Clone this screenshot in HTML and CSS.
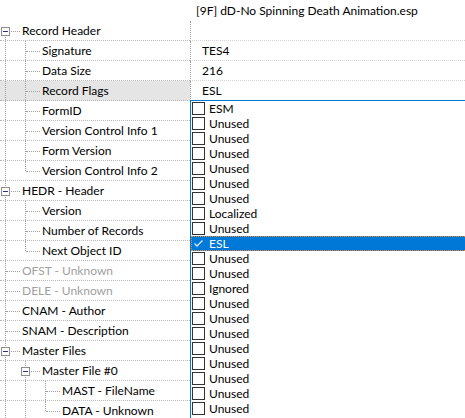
FILE: index.html
```html
<!DOCTYPE html>
<html lang="en">
  <head>
    <meta charset="UTF-8" />
    <title>Record Header</title>
    <link rel="stylesheet" href="styles.css">
  </head>
  <body>
    <div class="tree">
      <div class="row title">
        <div class="name"></div>
        <div class="value">[9F] dD-No Spinning Death Animation.esp</div>
      </div>

      <div class="row">
        <div class="name"><span class="g box first"><span class="exp"></span></span>Record Header</div>
        <div class="value"></div>
      </div>
      <div class="row">
        <div class="name"><span class="g pipe"></span><span class="g tee"></span>Signature</div>
        <div class="value">TES4</div>
      </div>
      <div class="row">
        <div class="name"><span class="g pipe"></span><span class="g tee"></span>Data Size</div>
        <div class="value">216</div>
      </div>
      <div class="row current">
        <div class="name"><span class="g pipe"></span><span class="g tee"></span>Record Flags</div>
        <div class="value">ESL</div>
      </div>
      <div class="row">
        <div class="name"><span class="g pipe"></span><span class="g tee"></span>FormID</div>
        <div class="value"></div>
      </div>
      <div class="row">
        <div class="name"><span class="g pipe"></span><span class="g tee"></span>Version Control Info 1</div>
        <div class="value"></div>
      </div>
      <div class="row">
        <div class="name"><span class="g pipe"></span><span class="g tee"></span>Form Version</div>
        <div class="value"></div>
      </div>
      <div class="row">
        <div class="name"><span class="g pipe"></span><span class="g ell"></span>Version Control Info 2</div>
        <div class="value"></div>
      </div>

      <div class="row">
        <div class="name"><span class="g box"><span class="exp"></span></span>HEDR - Header</div>
        <div class="value"></div>
      </div>
      <div class="row">
        <div class="name"><span class="g pipe"></span><span class="g tee"></span>Version</div>
        <div class="value"></div>
      </div>
      <div class="row">
        <div class="name"><span class="g pipe"></span><span class="g tee"></span>Number of Records</div>
        <div class="value"></div>
      </div>
      <div class="row">
        <div class="name"><span class="g pipe"></span><span class="g ell"></span>Next Object ID</div>
        <div class="value"></div>
      </div>

      <div class="row off">
        <div class="name"><span class="g tee"></span>OFST - Unknown</div>
        <div class="value"></div>
      </div>
      <div class="row off">
        <div class="name"><span class="g tee"></span>DELE - Unknown</div>
        <div class="value"></div>
      </div>
      <div class="row">
        <div class="name"><span class="g tee"></span>CNAM - Author</div>
        <div class="value"></div>
      </div>
      <div class="row">
        <div class="name"><span class="g tee"></span>SNAM - Description</div>
        <div class="value"></div>
      </div>

      <div class="row">
        <div class="name"><span class="g box"><span class="exp"></span></span>Master Files</div>
        <div class="value"></div>
      </div>
      <div class="row">
        <div class="name"><span class="g pipe"></span><span class="g box"><span class="exp"></span></span>Master File #0</div>
        <div class="value"></div>
      </div>
      <div class="row">
        <div class="name"><span class="g pipe"></span><span class="g pipe"></span><span class="g tee"></span>MAST - FileName</div>
        <div class="value"></div>
      </div>
      <div class="row">
        <div class="name"><span class="g pipe"></span><span class="g pipe"></span><span class="g ell"></span>DATA - Unknown</div>
        <div class="value"></div>
      </div>
    </div>

    <div class="flags">
      <div class="flag"><span class="cb"></span>ESM</div>
      <div class="flag"><span class="cb"></span>Unused</div>
      <div class="flag"><span class="cb"></span>Unused</div>
      <div class="flag"><span class="cb"></span>Unused</div>
      <div class="flag"><span class="cb"></span>Unused</div>
      <div class="flag"><span class="cb"></span>Unused</div>
      <div class="flag"><span class="cb"></span>Unused</div>
      <div class="flag"><span class="cb"></span>Localized</div>
      <div class="flag"><span class="cb"></span>Unused</div>
      <div class="flag on">
        <span class="cb">
          <svg width="11" height="11" viewBox="0 0 11 11"><path d="M1.5 5.5 L4 8 L9.5 2.5" fill="none" stroke="#d6e8fa" stroke-width="1.3"/></svg>
        </span>ESL
      </div>
      <div class="flag"><span class="cb"></span>Unused</div>
      <div class="flag"><span class="cb"></span>Unused</div>
      <div class="flag"><span class="cb"></span>Ignored</div>
      <div class="flag"><span class="cb"></span>Unused</div>
      <div class="flag"><span class="cb"></span>Unused</div>
      <div class="flag"><span class="cb"></span>Unused</div>
      <div class="flag"><span class="cb"></span>Unused</div>
      <div class="flag"><span class="cb"></span>Unused</div>
      <div class="flag"><span class="cb"></span>Unused</div>
      <div class="flag"><span class="cb"></span>Unused</div>
      <div class="flag"><span class="cb"></span>Unused</div>
    </div>
  </body>
</html>
```

FILE: styles.css
```css
* {
  margin: 0;
  padding: 0;
  box-sizing: border-box;
}

body {
  position: relative;
  width: 465px;
  height: 418px;
  overflow: hidden;
  background-color: #ffffff;
  font-family: Lato, "Noto Sans", sans-serif;
  font-size: 12px;
  color: #000000;
}

.tree {
  display: flex;
  flex-direction: column;
}

.row {
  display: flex;
  height: 20px;
  line-height: 19px;
  white-space: nowrap;
}

.row .name {
  display: flex;
  width: 190px;
  flex: none;
  border-bottom: 1px dotted #b9b9b9;
}

.row .value {
  flex: 1;
  padding-left: 11px;
  border-left: 1px dotted #a0a0a0;
  border-bottom: 1px dotted #d4d4d4;
}

.row.title {
  height: 21px;
  line-height: 21px;
}

.row.title .name,
.row.title .value {
  border: none;
}

.row.title .value {
  padding-left: 6px;
}

.row.current .name {
  background-color: #e5e5e5;
}

.row.off .name {
  color: #a0a0a0;
}

/* tree guide lines */
.g {
  position: relative;
  width: 20px;
  flex: none;
  margin-right: 2px;
}

.g + .g {
  margin-left: -2px;
}

.g::before {
  content: "";
  position: absolute;
  left: 5px;
  top: 0;
  bottom: 0;
  border-left: 1px dotted #a0a0a0;
}

.g.tee::after,
.g.ell::after,
.g.box::after {
  content: "";
  position: absolute;
  left: 6px;
  width: 14px;
  top: 10px;
  border-top: 1px dotted #a0a0a0;
}

.g.ell::before {
  bottom: auto;
  height: 10px;
}

.g.box.first::before {
  top: 10px;
}

.exp {
  position: absolute;
  z-index: 1;
  left: 1px;
  top: 6px;
  width: 9px;
  height: 9px;
  border: 1px solid #8d8d8d;
  background-color: #ffffff;
}

.exp::after {
  content: "";
  position: absolute;
  left: 1px;
  top: 3px;
  width: 5px;
  height: 1px;
  background-color: #27358c;
}

/* flags dropdown */
.flags {
  position: absolute;
  left: 190px;
  top: 100px;
  width: 320px;
  height: 318px;
  overflow: hidden;
  border: 1px solid #0078d7;
  border-bottom: none;
  background-color: #ffffff;
}

.flag {
  display: flex;
  align-items: center;
  gap: 4px;
  height: 15px;
  padding-left: 1px;
  line-height: 15px;
}

.cb {
  display: flex;
  align-items: center;
  justify-content: center;
  width: 13px;
  height: 13px;
  border: 1px solid #333333;
  background-color: #ffffff;
}

.flag.on {
  background-color: #0078d7;
  color: #ffffff;
  outline: 1px dotted #f2892a;
  outline-offset: -1px;
}

.flag.on .cb {
  border-color: #0078d7;
  background-color: #0078d7;
}
```
